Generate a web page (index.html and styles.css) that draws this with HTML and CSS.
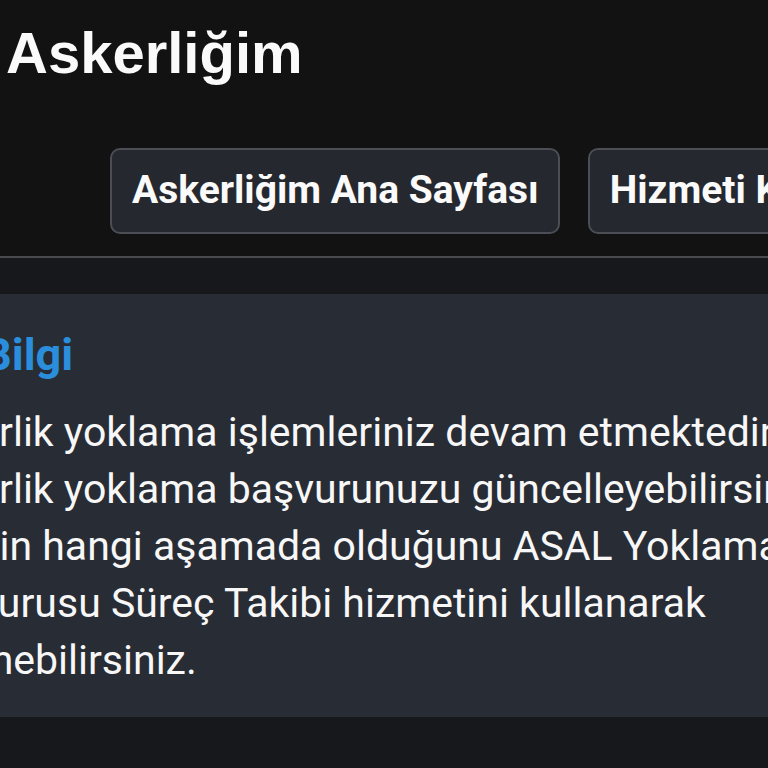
FILE: index.html
```html
<!DOCTYPE html>
<html lang="tr">

<head>
    <meta charset="UTF-8">
    <meta name="viewport" content="width=device-width, initial-scale=1.0">
    <title>Askerliğim</title>
    <link rel="stylesheet" href="styles.css">
</head>

<body>
    <!-- Header -->
    <div class="header">
        <h1>Askerliğim</h1>
        <div class="nav">
            <a href="#" class="nav-btn">Askerliğim Ana Sayfası</a>
            <a href="#" class="nav-btn">Hizmeti Kontrol Et</a>
        </div>
    </div>

    <!-- Main Section -->
    <div class="main">
        <div class="info-card">
            <h2 class="info-title">
                <span class="info-icon">
                    <svg width="34" height="34" viewBox="0 0 24 24" fill="none" stroke="currentColor" stroke-width="2">
                        <circle cx="12" cy="12" r="10"></circle>
                        <line x1="12" y1="11" x2="12" y2="17"></line>
                        <line x1="12" y1="7" x2="12" y2="7.5"></line>
                    </svg>
                </span>
                Bilgi
            </h2>
            <div class="info-text">
                <div class="line">Askerlik yoklama işlemleriniz devam etmektedir.</div>
                <div class="line">Askerlik yoklama başvurunuzu güncelleyebilirsiniz.</div>
                <div class="line">İsteğin hangi aşamada olduğunu ASAL Yoklama</div>
                <div class="line">Başvurusu Süreç Takibi hizmetini kullanarak</div>
                <div class="line">öğrenebilirsiniz.</div>
            </div>
        </div>
    </div>
</body>

</html>
```

FILE: styles.css
```css
:root {
    --header-bg: #121212;
    --page-bg: #17181c;
    --card-bg: #282c35;
    --btn-bg: #25282e;
    --btn-border: #4b4e54;
    --text-color: #f7f7f7;
    --accent-color: #2a8edc;
}

body {
    margin: 0;
    padding: 0;
    width: 768px;
    overflow: hidden;
    background-color: var(--page-bg);
    color: var(--text-color);
    font-family: 'Roboto', 'Liberation Sans', sans-serif;
}

/* Header */
.header {
    background-color: var(--header-bg);
    padding: 21px 0 0 6px;
    border-bottom: 2px solid #4a4a4d;
}

.header h1 {
    margin: 0;
    font-family: 'Liberation Sans', Arial, sans-serif;
    font-size: 58px;
    font-weight: bold;
    line-height: 64px;
    color: #fafafa;
}

.nav {
    display: flex;
    gap: 28px;
    margin-top: 63px;
    padding: 0 0 22px 104px;
    white-space: nowrap;
}

.nav-btn {
    flex-shrink: 0;
    display: block;
    padding: 17px 19px 18px 20px;
    background-color: var(--btn-bg);
    border: 2px solid var(--btn-border);
    border-radius: 10px;
    color: #fafafa;
    text-decoration: none;
    font-size: 39px;
    font-weight: bold;
    line-height: 1.2;
}

/* Main Section */
.main {
    padding: 36px 0 60px;
}

.info-card {
    background-color: var(--card-bg);
    margin-left: -91px;
    width: 1000px;
    padding: 34px 0 28px;
}

.info-title {
    display: flex;
    align-items: center;
    gap: 40px;
    margin: 0;
    font-size: 45px;
    font-weight: bold;
    line-height: 54px;
    color: var(--accent-color);
}

.info-icon {
    display: flex;
}

.info-text {
    margin-top: 22px;
    font-size: 41px;
    line-height: 57px;
    white-space: nowrap;
}
```
